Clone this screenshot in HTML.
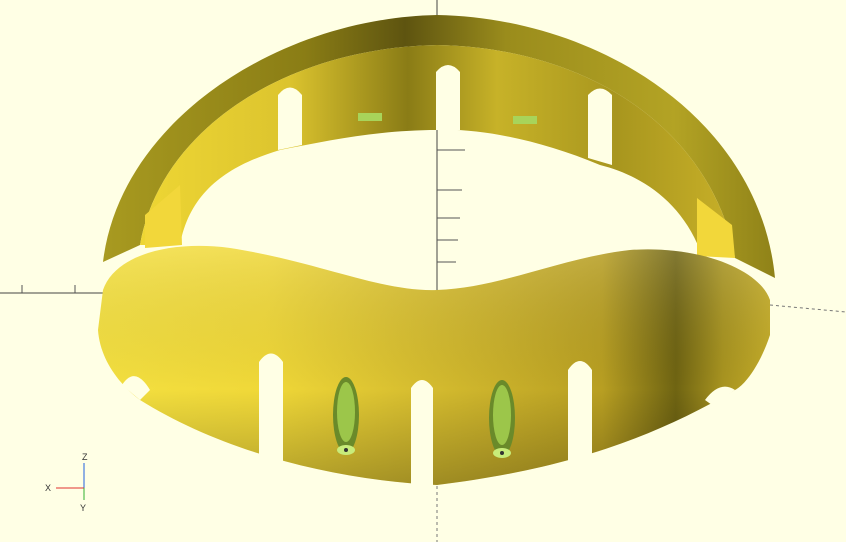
<!DOCTYPE html>
<html><head><meta charset="utf-8"><style>
html,body{margin:0;padding:0;background:#ffffe5;width:846px;height:542px;overflow:hidden}
svg{display:block}
text{font-family:"Liberation Sans",sans-serif;font-size:9px;fill:#333}
</style></head><body>
<svg width="846" height="542" viewBox="0 0 846 542">
<defs>
<linearGradient id="back" x1="0" y1="0" x2="1" y2="0">
<stop offset="0" stop-color="#a89a20"/><stop offset="0.3" stop-color="#8a7d15"/><stop offset="0.45" stop-color="#5e5410"/><stop offset="0.6" stop-color="#9a8c1c"/><stop offset="0.85" stop-color="#b3a324"/><stop offset="1" stop-color="#8f8218"/></linearGradient>
<linearGradient id="inner" x1="0" y1="0" x2="1" y2="0">
<stop offset="0" stop-color="#eed634"/><stop offset="0.25" stop-color="#dcc42e"/><stop offset="0.45" stop-color="#8a7c16"/><stop offset="0.6" stop-color="#c7b228"/><stop offset="0.8" stop-color="#a8961e"/><stop offset="1" stop-color="#c8b028"/></linearGradient>
<linearGradient id="front" x1="0" y1="0" x2="1" y2="0">
<stop offset="0" stop-color="#f4e040"/><stop offset="0.25" stop-color="#f0d838"/><stop offset="0.45" stop-color="#d9c030"/><stop offset="0.6" stop-color="#c9b02a"/><stop offset="0.75" stop-color="#b89f22"/><stop offset="0.86" stop-color="#6f6412"/><stop offset="0.93" stop-color="#a89420"/><stop offset="1" stop-color="#c4ac28"/></linearGradient>
<linearGradient id="fv" x1="0" y1="0" x2="0" y2="1">
<stop offset="0" stop-color="#fff" stop-opacity="0.15"/><stop offset="0.6" stop-color="#000" stop-opacity="0"/><stop offset="1" stop-color="#000" stop-opacity="0.25"/></linearGradient>
</defs>
<g stroke="#444" stroke-width="1">
<line x1="437" y1="0" x2="437" y2="290"/>
<line x1="0" y1="293" x2="110" y2="293"/>
</g>
<g stroke="#777" stroke-width="1" stroke-dasharray="3,3">
<line x1="770" y1="305" x2="846" y2="312"/>
<line x1="437" y1="480" x2="437" y2="542"/>
</g>
<path d="M103,262 C120,120 280,18 437,15 C600,18 760,120 775,278 L735,258 C715,140 600,48 437,45 C285,48 160,130 140,245 Z" fill="url(#back)"/>
<path d="M140,245 C160,130 285,48 437,45 C600,48 715,140 735,258 L700,250 C680,200 640,175 600,165 C540,140 480,128 437,130 C380,130 330,140 280,150 C230,165 190,190 180,245 Z" fill="url(#inner)"/>
<path d="M145,215 L180,185 L182,245 L145,248 Z" fill="#f2d73a"/>
<path d="M697,198 L732,225 L735,258 L697,256 Z" fill="#f2d73a"/>
<g fill="#ffffe5">
<path d="M278,150 L278,95 Q290,80 302,95 L302,145 Z"/>
<path d="M436,130 L436,72 Q448,58 460,72 L460,130 Z"/>
<path d="M588,158 L588,95 Q600,82 612,95 L612,165 Z"/>
</g>
<rect x="358" y="113" width="24" height="8" fill="#a8d45a"/>
<rect x="513" y="116" width="24" height="8" fill="#a8d45a"/>
<path d="M103,290 C115,255 170,240 230,248 C320,262 380,292 437,290 C500,288 560,258 630,250 C700,245 760,270 770,300 L770,335 C760,365 745,385 735,390 C650,440 560,470 437,485 C330,480 220,450 140,400 C120,385 100,360 98,330 Z" fill="url(#front)"/>
<path d="M103,290 C115,255 170,240 230,248 C320,262 380,292 437,290 C500,288 560,258 630,250 C700,245 760,270 770,300 L770,335 C760,365 745,385 735,390 C650,440 560,470 437,485 C330,480 220,450 140,400 C120,385 100,360 98,330 Z" fill="url(#fv)"/>
<g fill="#ffffe5">
<path d="M259,460 L259,362 Q271,345 283,362 L283,462 Z"/>
<path d="M411,485 L411,388 Q422,372 433,388 L433,485 Z"/>
<path d="M568,470 L568,370 Q580,352 592,370 L592,468 Z"/>
<path d="M122,385 Q135,365 150,390 L140,400 Z"/>
<path d="M735,390 Q720,380 705,400 L712,405 Z"/>
</g>
<ellipse cx="346" cy="415" rx="13" ry="38" fill="#6a8a2a"/>
<ellipse cx="346" cy="412" rx="9" ry="30" fill="#9cc64a"/>
<ellipse cx="346" cy="450" rx="9" ry="5" fill="#c8ec7a"/><circle cx="346" cy="450" r="2" fill="#333"/>
<ellipse cx="502" cy="418" rx="13" ry="38" fill="#6a8a2a"/>
<ellipse cx="502" cy="415" rx="9" ry="30" fill="#9cc64a"/>
<ellipse cx="502" cy="453" rx="9" ry="5" fill="#c8ec7a"/><circle cx="502" cy="453" r="2" fill="#333"/>
<g stroke="#555" stroke-width="1">
<line x1="437" y1="150" x2="465" y2="150"/><line x1="437" y1="190" x2="462" y2="190"/><line x1="437" y1="218" x2="460" y2="218"/><line x1="437" y1="240" x2="458" y2="240"/><line x1="437" y1="262" x2="456" y2="262"/>
<line x1="22" y1="293" x2="22" y2="285"/><line x1="75" y1="293" x2="75" y2="285"/>
</g>
<g stroke-width="1">
<line x1="84" y1="488" x2="84" y2="463" stroke="#2060e0"/>
<line x1="84" y1="488" x2="56" y2="488" stroke="#e03030"/>
<line x1="84" y1="488" x2="84" y2="500" stroke="#30b030"/>
</g>
<text x="82" y="460">Z</text><text x="45" y="491">X</text><text x="80" y="511">Y</text>
</svg>
</body></html>
